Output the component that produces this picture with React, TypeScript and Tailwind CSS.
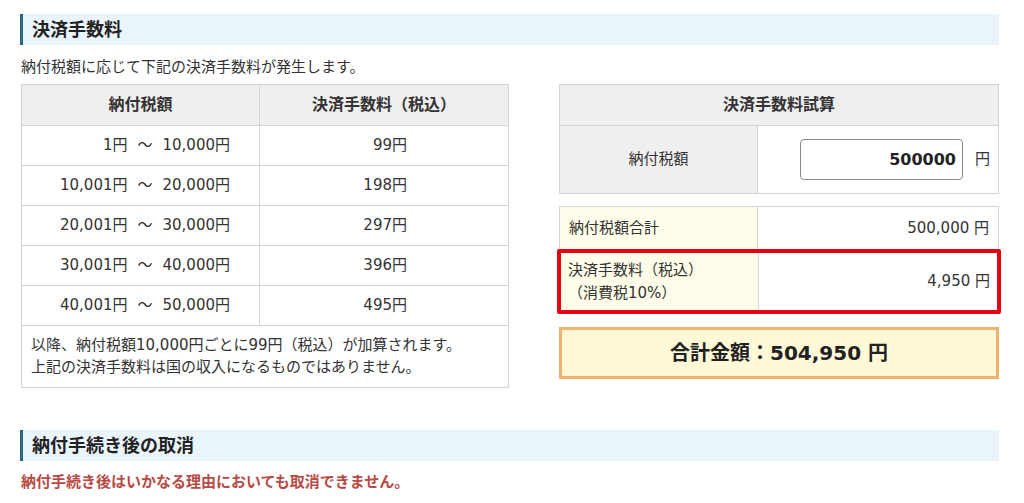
import React from "react";

const rows = [
  { from: "1円", to: "10,000円", fee: "99円" },
  { from: "10,001円", to: "20,000円", fee: "198円" },
  { from: "20,001円", to: "30,000円", fee: "297円" },
  { from: "30,001円", to: "40,000円", fee: "396円" },
  { from: "40,001円", to: "50,000円", fee: "495円" },
];

function Heading({ children }: { children: React.ReactNode }) {
  return (
    <h2 className="flex h-[31px] items-center border-l-[3px] border-[#2d6685] bg-[#eaf4fb] pl-[9px] text-[18px] font-bold text-[#222]">
      {children}
    </h2>
  );
}

export default function App() {
  return (
    <div
      className="w-[1024px] bg-white text-[15px] text-[#333]"
      style={{ fontFamily: '"DejaVu Sans", "Noto Sans CJK JP", sans-serif' }}
    >
      <div className="ml-[20px] w-[979px] pt-[14px]">
        {/* 決済手数料 */}
        <Heading>決済手数料</Heading>
        <p className="mt-[11px] ml-px leading-[22px]">納付税額に応じて下記の決済手数料が発生します。</p>

        <div className="mt-[6px] flex gap-[50px] pl-px">
          {/* fee table */}
          <table className="w-[488px] border-collapse">
            <thead>
              <tr className="h-[41px] bg-[#efefef] text-[16px]">
                <th className="w-[238px] border border-[#d4d4d4] font-bold">納付税額</th>
                <th className="border border-[#d4d4d4] font-bold">決済手数料（税込）</th>
              </tr>
            </thead>
            <tbody>
              {rows.map((r) => (
                <tr key={r.from} className="h-[40px]">
                  <td className="border border-[#d4d4d4] pr-[29px] text-right">
                    {r.from}
                    <span className="mx-[10px]">～</span>
                    {r.to}
                  </td>
                  <td className="border border-[#d4d4d4] pr-[101px] text-right">{r.fee}</td>
                </tr>
              ))}
              <tr>
                <td colSpan={2} className="border border-[#d4d4d4] px-[9px] pt-[8px] pb-[9px] leading-[22px]">
                  以降、納付税額10,000円ごとに99円（税込）が加算されます。
                  <br />
                  上記の決済手数料は国の収入になるものではありません。
                </td>
              </tr>
            </tbody>
          </table>

          {/* simulator */}
          <div className="w-[440px]">
            <table className="w-full border-collapse">
              <tbody>
                <tr className="h-[41px] bg-[#efefef]">
                  <th colSpan={2} className="border border-[#d4d4d4] text-[16px] font-bold">決済手数料試算</th>
                </tr>
                <tr className="h-[68px]">
                  <td className="w-[198px] border border-[#d4d4d4] bg-[#efefef] text-center">納付税額</td>
                  <td className="border border-[#d4d4d4] pl-[42px]">
                    <div className="flex items-center gap-[12px]">
                      <input
                        readOnly
                        value="500000"
                        className="h-[41px] w-[163px] rounded-[4px] border border-[#8a8a8a] pr-[6px] text-right text-[16px] font-bold text-[#222] outline-none"
                      />
                      <span>円</span>
                    </div>
                  </td>
                </tr>
              </tbody>
            </table>

            <div className="mt-[12px] flex flex-col">
              <div className="flex h-[43px] border border-b-0 border-[#d4d4d4]">
                <div className="flex w-[197px] items-center bg-[#fefde9] pl-[9px]">納付税額合計</div>
                <div className="flex flex-1 items-center justify-end border-l border-[#d4d4d4] pr-[9px]">500,000 円</div>
              </div>
              <div className="-mx-[2px] flex h-[65px] rounded-[2px] border-4 border-[#e60012]">
                <div className="flex w-[197px] flex-col justify-center bg-[#fefde9] pl-[7px] leading-[23px]">
                  <span>決済手数料（税込）</span>
                  <span>（消費税10%）</span>
                </div>
                <div className="flex flex-1 items-center justify-end border-l border-[#d4d4d4] pr-[7px]">4,950 円</div>
              </div>
            </div>

            <div className="mt-[13px] flex h-[52px] items-center justify-center border-[3px] border-[#f2b46a] bg-[#fff9d8] text-[20px] font-bold text-[#222]">
              合計金額：504,950 円
            </div>
          </div>
        </div>

        {/* 納付手続き後の取消 */}
        <div className="mt-[42px]">
          <Heading>納付手続き後の取消</Heading>
          <p className="mt-[10px] ml-px font-bold leading-[22px] text-[#b84a45]">
            納付手続き後はいかなる理由においても取消できません。
          </p>
        </div>
      </div>
    </div>
  );
}
